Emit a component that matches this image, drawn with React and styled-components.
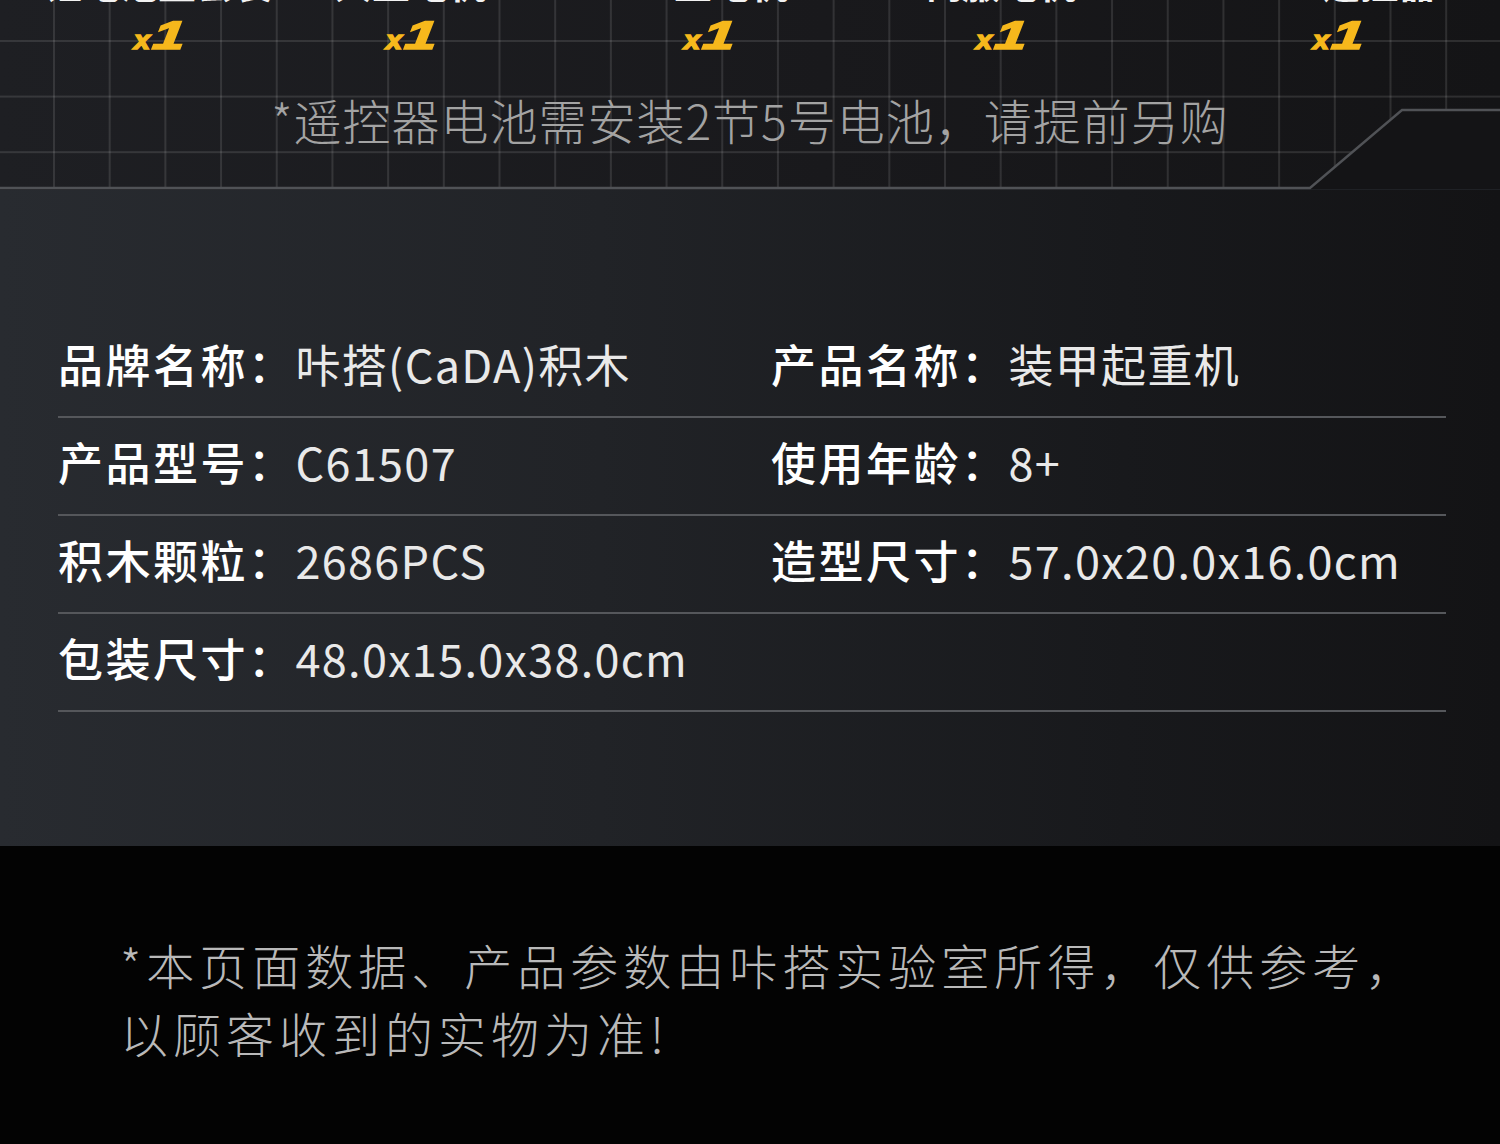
import React from "react";
import styled, { createGlobalStyle } from "styled-components";

const Global = createGlobalStyle`
  html, body { margin: 0; padding: 0; background: #030303; }
  body { font-family: "Noto Sans CJK SC", "Noto Sans", sans-serif; }
  * { box-sizing: border-box; }
`;

const Page = styled.div`
  width: 1500px;
  display: flex;
  flex-direction: column;
`;

const TopSection = styled.section`
  position: relative;
  height: 190px;
  overflow: hidden;
  background-color: #18191c;
  background-image:
    linear-gradient(90deg, rgba(255,255,255,0.11) 0 2px, transparent 2px),
    linear-gradient(180deg, rgba(255,255,255,0.11) 0 2px, transparent 2px),
    linear-gradient(90deg, #1e1f23 0%, #19191c 55%, #141416 100%);
  background-size: 55.7px 55.6px, 55.7px 55.6px, 100% 100%;
  background-position: -2.7px -15.6px, -2.7px -15.6px, 0 0;
  display: flex;
  flex-direction: column;
`;

const Frame = styled.svg`
  position: absolute;
  left: 0;
  top: 0;
  pointer-events: none;
`;

const ItemsRow = styled.div`
  position: relative;
  z-index: 1;
  display: flex;
  margin-top: -38px;
`;

const Item = styled.div`
  flex: none;
  width: ${(p) => p.$w}px;
  margin-left: ${(p) => p.$ml || 0}px;
  display: flex;
  flex-direction: column;
  align-items: center;
`;

const ItemName = styled.div`
  font-size: 38px;
  line-height: 40px;
  font-weight: 700;
  color: #f2f2f2;
  white-space: nowrap;
`;

const Count = styled.div`
  margin-top: 14px;
  font-family: "Liberation Sans", Arial, sans-serif;
  font-style: italic;
  font-weight: 700;
  color: #f6b81c;
  line-height: 38px;
  height: 38px;
  display: flex;
  align-items: baseline;
  gap: 9px;
  -webkit-text-stroke: 1.6px #f6b81c;
`;

const CountX = styled.span`
  font-size: 25px;
  display: inline-block;
  transform: scaleX(1.15);
`;

const CountN = styled.span`
  font-size: 40px;
  display: inline-block;
  transform: skewX(-6deg) scaleX(1.45);
`;

const Notice = styled.div`
  position: relative;
  z-index: 1;
  margin-top: 35px;
  text-align: center;
  font-size: 48px;
  line-height: 60px;
  font-weight: 300;
  letter-spacing: 1px;
  color: #a3a3a3;
`;

const SpecSection = styled.section`
  background: linear-gradient(90deg, #282b30 0%, #212327 40%, #18191c 75%, #131315 100%);
  padding: 130px 54px 134px 58px;
`;

const SpecRow = styled.div`
  display: flex;
  padding: 14px 0 22px;
  border-bottom: 2px solid #55575b;
`;

const SpecCell = styled.div`
  flex: none;
  width: ${(p) => p.$w}px;
  display: flex;
  align-items: center;
  font-size: 45px;
  line-height: 60px;
  white-space: nowrap;
`;

const SpecLabel = styled.span`
  font-weight: 500;
  letter-spacing: 2.5px;
  color: #ffffff;
`;

const SpecValue = styled.span`
  font-weight: 400;
  letter-spacing: 1.3px;
  color: #e9e9e9;
`;

const Footer = styled.section`
  height: 299px;
  background: #030303;
  padding: 84px 0 0 120px;
`;

const FooterText = styled.p`
  margin: 0;
  font-size: 48px;
  line-height: 68px;
  font-weight: 300;
  letter-spacing: 5px;
  color: #b9b9b9;
`;

const items = [
  { name: "锂电池盒套装", w: 316 },
  { name: "大型电机", w: 188 },
  { name: "XL型电机", w: 408 },
  { name: "伺服电机", w: 176 },
  { name: "2.4G遥控器", w: 326, ml: 86 },
];

const specs = [
  [
    ["品牌名称：", "咔搭(CaDA)积木"],
    ["产品名称：", "装甲起重机"],
  ],
  [
    ["产品型号：", "C61507"],
    ["使用年龄：", "8+"],
  ],
  [
    ["积木颗粒：", "2686PCS"],
    ["造型尺寸：", "57.0x20.0x16.0cm"],
  ],
  [["包装尺寸：", "48.0x15.0x38.0cm"]],
];

export default function App() {
  return (
    <Page>
      <Global />
      <TopSection>
        <Frame width="1500" height="190" viewBox="0 0 1500 190">
          <path d="M1310 189 L1402 110 H1500 V190 H1310 Z" fill="#141416" />
          <rect x="0" y="189" width="1500" height="1" fill="#1f2125" />
          <path
            d="M0 188 H1310 L1402 110 H1500"
            fill="none"
            stroke="#505256"
            strokeWidth="2.4"
          />
        </Frame>
        <ItemsRow>
          {items.map((it) => (
            <Item key={it.name} $w={it.w} $ml={it.ml}>
              <ItemName>{it.name}</ItemName>
              <Count>
                <CountX>x</CountX>
                <CountN>1</CountN>
              </Count>
            </Item>
          ))}
        </ItemsRow>
        <Notice>*遥控器电池需安装2节5号电池，请提前另购</Notice>
      </TopSection>

      <SpecSection>
        {specs.map((row, i) => (
          <SpecRow key={i}>
            {row.map(([label, value], j) => (
              <SpecCell key={j} $w={j === 0 ? 713 : 675}>
                <SpecLabel>{label}</SpecLabel>
                <SpecValue>{value}</SpecValue>
              </SpecCell>
            ))}
          </SpecRow>
        ))}
      </SpecSection>

      <Footer>
        <FooterText>
          *本页面数据、产品参数由咔搭实验室所得，仅供参考，
          <br />
          以顾客收到的实物为准!
        </FooterText>
      </Footer>
    </Page>
  );
}
